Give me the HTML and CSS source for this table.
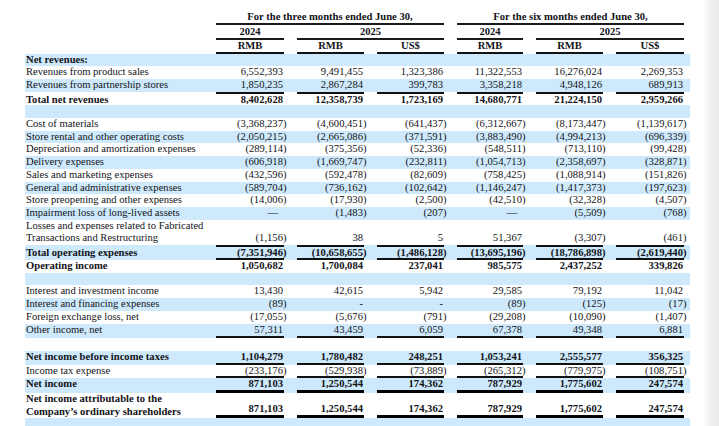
FILE: index.html
```html
<!DOCTYPE html>
<html lang="en">
<head>
<meta charset="utf-8">
<title>Unaudited Condensed Consolidated Statements of Comprehensive Income</title>
<link rel="stylesheet" href="styles.css">
</head>
<body>
<div class="page">
  <div class="statement">
    <div class="hrow h1">
      <div class="hc span-q3 ul">For the three months ended June 30,</div>
      <div class="hc span-q6 ul">For the six months ended June 30,</div>
    </div>
    <div class="hrow h2">
      <div class="hc c2 ul">2024</div>
      <div class="hc span-25a ul">2025</div>
      <div class="hc c5 ul">2024</div>
      <div class="hc span-25b ul">2025</div>
    </div>
    <div class="hrow h3">
      <div class="hc c2 ul2">RMB</div>
      <div class="hc ul2">RMB</div>
      <div class="hc ul2">US$</div>
      <div class="hc ul2">RMB</div>
      <div class="hc ul2">RMB</div>
      <div class="hc ul2">US$</div>
    </div>

    <div class="row s b"><div class="lab">Net revenues:</div></div>
    <div class="row">
      <div class="lab">Revenues from product sales</div>
      <div class="num">6,552,393</div><div class="num">9,491,455</div><div class="num">1,323,386</div><div class="num">11,322,553</div><div class="num">16,276,024</div><div class="num">2,269,353</div>
    </div>
    <div class="row s">
      <div class="lab">Revenues from partnership stores</div>
      <div class="num">1,850,235</div><div class="num">2,867,284</div><div class="num">399,783</div><div class="num">3,358,218</div><div class="num">4,948,126</div><div class="num">689,913</div>
    </div>
    <div class="row b rt tnr">
      <div class="lab">Total net revenues</div>
      <div class="num">8,402,628</div><div class="num">12,358,739</div><div class="num">1,723,169</div><div class="num">14,680,771</div><div class="num">21,224,150</div><div class="num">2,959,266</div>
    </div>
    <div class="row s blank"></div>
    <div class="row">
      <div class="lab">Cost of materials</div>
      <div class="num"><span class="neg">(3,368,237)</span></div><div class="num"><span class="neg">(4,600,451)</span></div><div class="num"><span class="neg">(641,437)</span></div><div class="num"><span class="neg">(6,312,667)</span></div><div class="num"><span class="neg">(8,173,447)</span></div><div class="num"><span class="neg">(1,139,617)</span></div>
    </div>
    <div class="row s">
      <div class="lab">Store rental and other operating costs</div>
      <div class="num"><span class="neg">(2,050,215)</span></div><div class="num"><span class="neg">(2,665,086)</span></div><div class="num"><span class="neg">(371,591)</span></div><div class="num"><span class="neg">(3,883,490)</span></div><div class="num"><span class="neg">(4,994,213)</span></div><div class="num"><span class="neg">(696,339)</span></div>
    </div>
    <div class="row">
      <div class="lab">Depreciation and amortization expenses</div>
      <div class="num"><span class="neg">(289,114)</span></div><div class="num"><span class="neg">(375,356)</span></div><div class="num"><span class="neg">(52,336)</span></div><div class="num"><span class="neg">(548,511)</span></div><div class="num"><span class="neg">(713,110)</span></div><div class="num"><span class="neg">(99,428)</span></div>
    </div>
    <div class="row s">
      <div class="lab">Delivery expenses</div>
      <div class="num"><span class="neg">(606,918)</span></div><div class="num"><span class="neg">(1,669,747)</span></div><div class="num"><span class="neg">(232,811)</span></div><div class="num"><span class="neg">(1,054,713)</span></div><div class="num"><span class="neg">(2,358,697)</span></div><div class="num"><span class="neg">(328,871)</span></div>
    </div>
    <div class="row">
      <div class="lab">Sales and marketing expenses</div>
      <div class="num"><span class="neg">(432,596)</span></div><div class="num"><span class="neg">(592,478)</span></div><div class="num"><span class="neg">(82,609)</span></div><div class="num"><span class="neg">(758,425)</span></div><div class="num"><span class="neg">(1,088,914)</span></div><div class="num"><span class="neg">(151,826)</span></div>
    </div>
    <div class="row s">
      <div class="lab">General and administrative expenses</div>
      <div class="num"><span class="neg">(589,704)</span></div><div class="num"><span class="neg">(736,162)</span></div><div class="num"><span class="neg">(102,642)</span></div><div class="num"><span class="neg">(1,146,247)</span></div><div class="num"><span class="neg">(1,417,373)</span></div><div class="num"><span class="neg">(197,623)</span></div>
    </div>
    <div class="row">
      <div class="lab">Store preopening and other expenses</div>
      <div class="num"><span class="neg">(14,006)</span></div><div class="num"><span class="neg">(17,930)</span></div><div class="num"><span class="neg">(2,500)</span></div><div class="num"><span class="neg">(42,510)</span></div><div class="num"><span class="neg">(32,328)</span></div><div class="num"><span class="neg">(4,507)</span></div>
    </div>
    <div class="row s">
      <div class="lab">Impairment loss of long-lived assets</div>
      <div class="num"><span class="dash">—</span></div><div class="num"><span class="neg">(1,483)</span></div><div class="num"><span class="neg">(207)</span></div><div class="num"><span class="dash">—</span></div><div class="num"><span class="neg">(5,509)</span></div><div class="num"><span class="neg">(768)</span></div>
    </div>
    <div class="row two">
      <div class="lab">Losses and expenses related to Fabricated<br>Transactions and Restructuring</div>
      <div class="num"><span class="neg">(1,156)</span></div><div class="num">38</div><div class="num">5</div><div class="num">51,367</div><div class="num"><span class="neg">(3,307)</span></div><div class="num"><span class="neg">(461)</span></div>
    </div>
    <div class="row s b rt rb toe">
      <div class="lab">Total operating expenses</div>
      <div class="num"><span class="neg">(7,351,946)</span></div><div class="num"><span class="neg">(10,658,655)</span></div><div class="num"><span class="neg">(1,486,128)</span></div><div class="num"><span class="neg">(13,695,196)</span></div><div class="num"><span class="neg">(18,786,898)</span></div><div class="num"><span class="neg">(2,619,440)</span></div>
    </div>
    <div class="row b">
      <div class="lab">Operating income</div>
      <div class="num">1,050,682</div><div class="num">1,700,084</div><div class="num">237,041</div><div class="num">985,575</div><div class="num">2,437,252</div><div class="num">339,826</div>
    </div>
    <div class="row s blank"></div>
    <div class="row">
      <div class="lab">Interest and investment income</div>
      <div class="num">13,430</div><div class="num">42,615</div><div class="num">5,942</div><div class="num">29,585</div><div class="num">79,192</div><div class="num">11,042</div>
    </div>
    <div class="row s">
      <div class="lab">Interest and financing expenses</div>
      <div class="num"><span class="neg">(89)</span></div><div class="num">-</div><div class="num">-</div><div class="num"><span class="neg">(89)</span></div><div class="num"><span class="neg">(125)</span></div><div class="num"><span class="neg">(17)</span></div>
    </div>
    <div class="row">
      <div class="lab">Foreign exchange loss, net</div>
      <div class="num"><span class="neg">(17,055)</span></div><div class="num"><span class="neg">(5,676)</span></div><div class="num"><span class="neg">(791)</span></div><div class="num"><span class="neg">(29,208)</span></div><div class="num"><span class="neg">(10,090)</span></div><div class="num"><span class="neg">(1,407)</span></div>
    </div>
    <div class="row s rb">
      <div class="lab">Other income, net</div>
      <div class="num">57,311</div><div class="num">43,459</div><div class="num">6,059</div><div class="num">67,378</div><div class="num">49,348</div><div class="num">6,881</div>
    </div>
    <div class="row blank"></div>
    <div class="row s b rb nibt">
      <div class="lab">Net income before income taxes</div>
      <div class="num">1,104,279</div><div class="num">1,780,482</div><div class="num">248,251</div><div class="num">1,053,241</div><div class="num">2,555,577</div><div class="num">356,325</div>
    </div>
    <div class="row rb tax">
      <div class="lab">Income tax expense</div>
      <div class="num"><span class="neg">(233,176)</span></div><div class="num"><span class="neg">(529,938)</span></div><div class="num"><span class="neg">(73,889)</span></div><div class="num"><span class="neg">(265,312)</span></div><div class="num"><span class="neg">(779,975)</span></div><div class="num"><span class="neg">(108,751)</span></div>
    </div>
    <div class="row s b rd ni">
      <div class="lab">Net income</div>
      <div class="num">871,103</div><div class="num">1,250,544</div><div class="num">174,362</div><div class="num">787,929</div><div class="num">1,775,602</div><div class="num">247,574</div>
    </div>
    <div class="row b two rd">
      <div class="lab">Net income attributable to the<br>Company’s ordinary shareholders</div>
      <div class="num">871,103</div><div class="num">1,250,544</div><div class="num">174,362</div><div class="num">787,929</div><div class="num">1,775,602</div><div class="num">247,574</div>
    </div>
    <div class="row s blank"></div>
  </div>
</div>
</body>
</html>
```

FILE: styles.css
```css
html, body {
  margin: 0;
  padding: 0;
}

body {
  width: 719px;
  height: 426px;
  overflow: hidden;
  background: linear-gradient(90deg, #ffffff 0, #ffffff 702px, #f1f1f1 710px, #e9e9e9 719px);
  font-family: "Liberation Serif", "Times New Roman", serif;
  font-size: 10.6px;
  color: #131318;
}

.page {
  padding: 10px 0 0 25px;
}

.statement {
  width: 665px;
}

/* shared column grid: label + six figure columns */
.hrow,
.row {
  display: grid;
  grid-template-columns: 178px 68px 67px 67px 66px 67px 68px;
  column-gap: 13px;
  padding-right: 6px;
  white-space: nowrap;
}

/* header */
.hrow {
  font-weight: bold;
  text-align: center;
  line-height: 13px;
}

.h3 {
  line-height: 11.5px;
}

.hc.ul {
  border-bottom: 2px solid #1a1a1a;
}

.hc.ul2 {
  border-bottom: 2px solid #111111;
}

.span-q3 { grid-column: 2 / 5; }
.span-q6 { grid-column: 5 / 8; }
.c2 { grid-column: 2; }
.span-25a { grid-column: 3 / 5; }
.c5 { grid-column: 5; }
.span-25b { grid-column: 6 / 8; }

/* body rows */
.row {
  line-height: 12.7px;
  align-items: baseline;
}

.row.s {
  background: #cde9fb;
}

.row.b {
  font-weight: bold;
}

.row.blank {
  height: 12.7px;
}

.lab {
  padding-left: 1px;
}

.num {
  text-align: right;
  padding-right: 1px;
}

.row.two {
  align-items: end;
}

.neg {
  margin-right: -3.5px;
}

.dash {
  padding-right: 5px;
}

/* accounting rules over / under the figure columns */
.rt .num {
  border-top: 2px solid #111111;
}

.rb .num {
  border-bottom: 2px solid #111111;
}

.rd .num {
  border-bottom: 3px solid #000000;
}

.tnr {
  line-height: 11.7px;
}

.toe {
  line-height: 11px;
}

.nibt {
  line-height: 12px;
}

.tax,
.ni {
  line-height: 11.5px;
}
```
